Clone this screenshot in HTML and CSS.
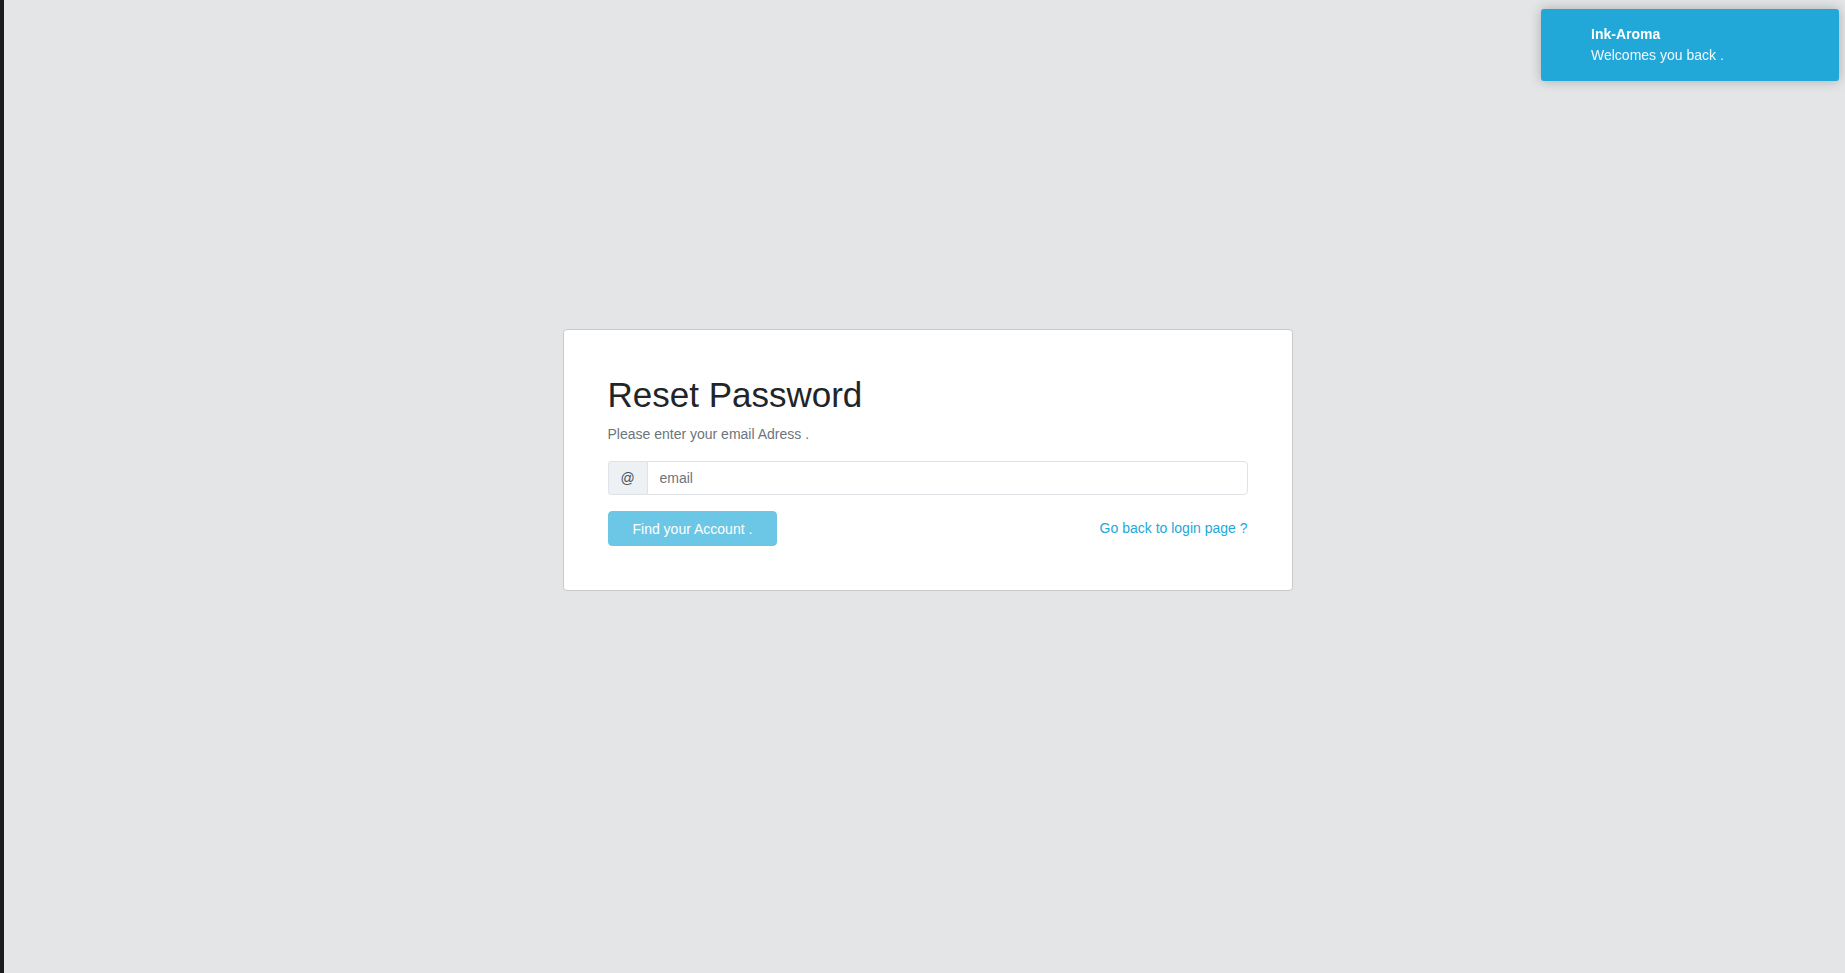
FILE: index.html
```html
<!DOCTYPE html>
<html lang="en">
<head>
<meta charset="utf-8">
<title>Reset Password</title>
<link rel="stylesheet" href="styles.css">
</head>
<body>
<main class="page">
  <section class="card">
    <h1 class="card-title">Reset Password</h1>
    <p class="card-sub">Please enter your email Adress .</p>
    <div class="input-group">
      <span class="addon">@</span>
      <input class="field" type="text" placeholder="email">
    </div>
    <div class="actions">
      <button class="btn" type="button">Find your Account .</button>
      <a class="link" href="#">Go back to login page ?</a>
    </div>
  </section>
</main>
<div class="toast">
  <div class="toast-title">Ink-Aroma</div>
  <div class="toast-msg">Welcomes you back .</div>
</div>
</body>
</html>
```

FILE: styles.css
```css
* { box-sizing: border-box; }
html, body { height: 100%; }
body {
  margin: 0;
  min-height: 100vh;
  background: #e4e5e7;
  border-left: 4px solid #1c1c1c;
  font-family: "Liberation Sans", Arial, sans-serif;
  font-size: 14px;
  line-height: 1.5;
  color: #212529;
}
.page {
  display: flex;
  justify-content: center;
  padding: 329px 0 0 6px;
}
.card {
  width: 730px;
  background: #fff;
  border: 1px solid #c8c9cb;
  border-radius: 4px;
  padding: 44px 44px 44px 44px;
}
.card-title {
  margin: 0 0 8px;
  font-size: 35px;
  font-weight: 400;
  line-height: 1.2;
  color: #212529;
}
.card-sub {
  margin: 0 0 16px;
  color: #6c757d;
  font-size: 14px;
  line-height: 21px;
}
.input-group {
  display: flex;
  height: 34px;
  margin-bottom: 16px;
}
.addon {
  display: flex;
  align-items: center;
  justify-content: center;
  width: 39px;
  background: #eef1f4;
  border: 1px solid #dfe2e6;
  border-right: none;
  border-radius: 4px 0 0 4px;
  color: #495057;
  font-size: 14px;
}
.field {
  flex: 1;
  min-width: 0;
  border: 1px solid #dfe2e6;
  border-radius: 0 4px 4px 0;
  padding: 0 12px;
  font-family: inherit;
  font-size: 14px;
  color: #495057;
  outline: none;
}
.field::placeholder { color: #6c757d; }
.actions {
  display: flex;
  align-items: center;
  justify-content: space-between;
}
.btn {
  height: 35px;
  padding: 0 24px;
  background: #6cc6e5;
  border: 1px solid #6cc6e5;
  border-radius: 4px;
  color: #fff;
  font-family: inherit;
  font-size: 14px;
}
.link {
  color: #22a8da;
  text-decoration: none;
  font-size: 14px;
}
.toast {
  position: fixed;
  top: 9px;
  right: 6px;
  width: 298px;
  height: 72px;
  padding: 15px 15px 15px 50px;
  background: #21a7d8;
  border-radius: 3px;
  box-shadow: 0 0 12px rgba(0, 0, 0, 0.25);
  color: #fff;
  font-size: 14px;
  line-height: 21px;
}
.toast-title { font-weight: 700; }
.toast-msg { color: #f2f9fc; }
```
